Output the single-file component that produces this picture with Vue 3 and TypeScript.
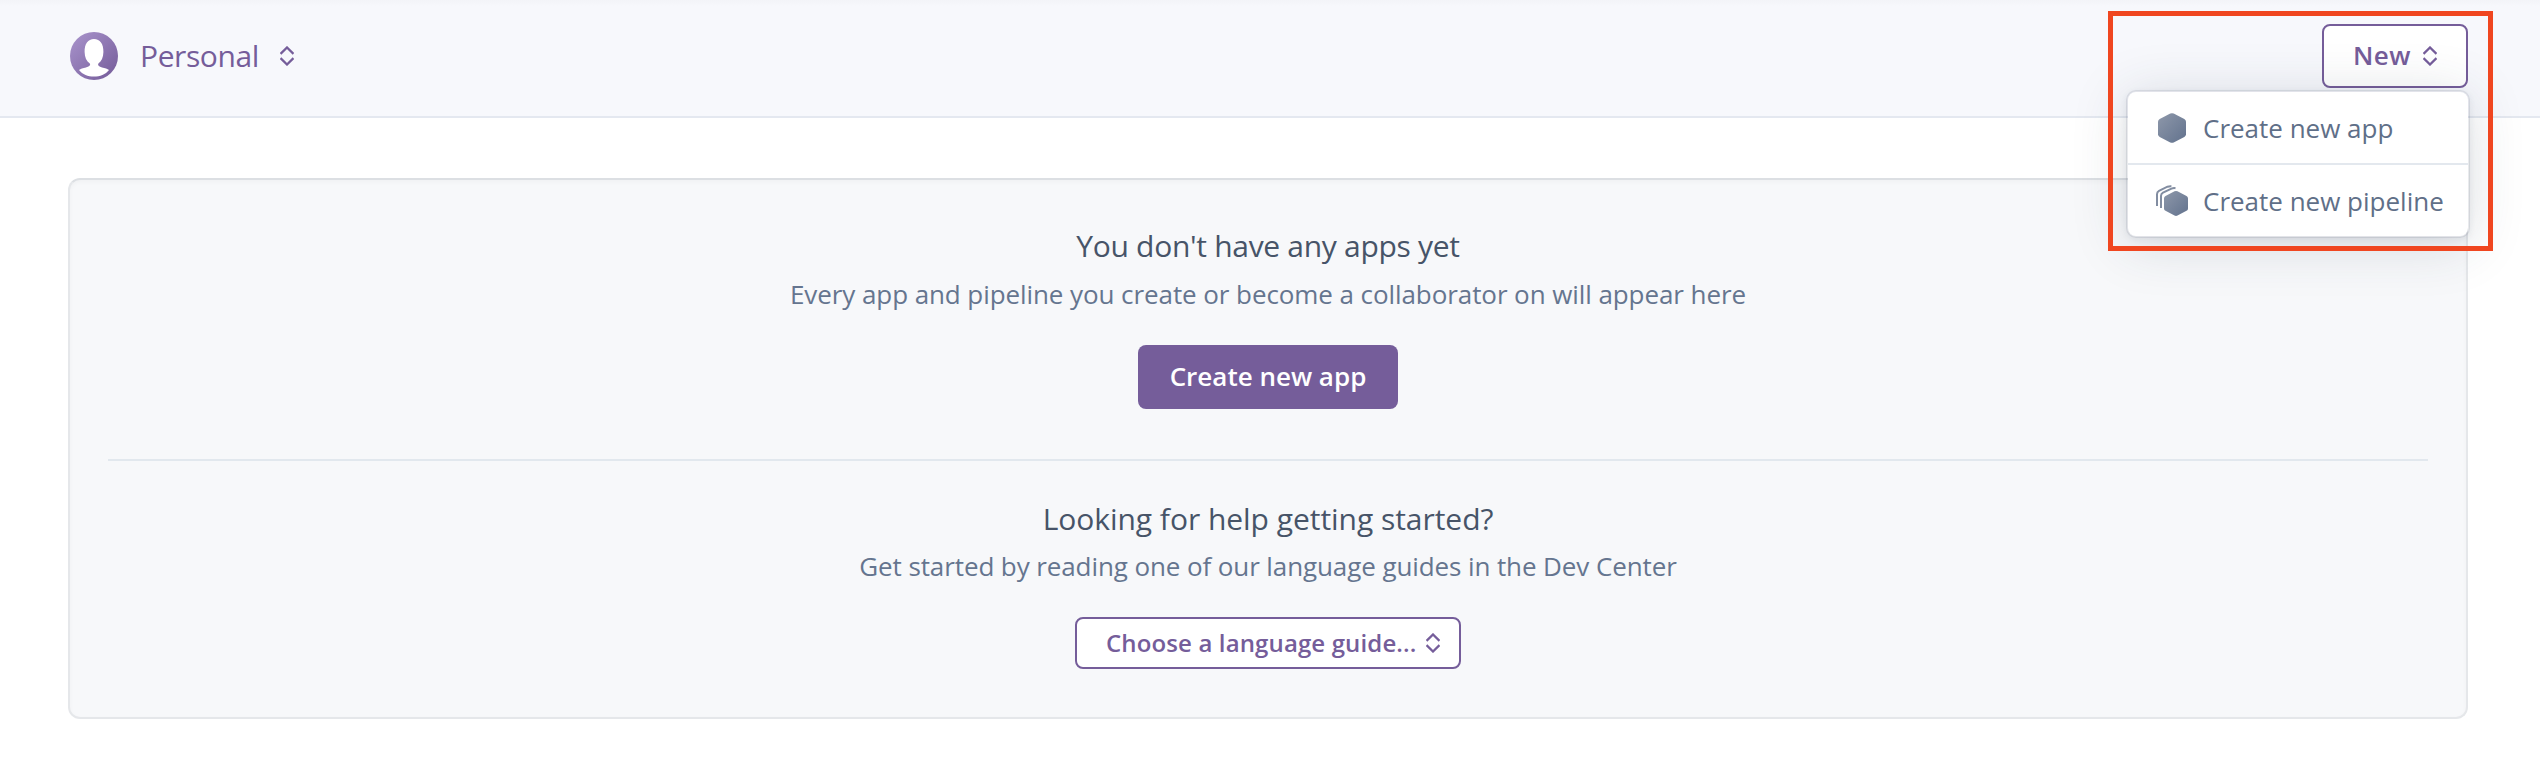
<script setup lang="ts">
interface MenuItem {
  label: string
  icon: 'app' | 'pipeline'
}

const account = 'Personal'
const chevronPath = 'M.5 7.800L7 1.500L13.500 7.800M.5 12.200L7 18.500L13.500 12.200'

const menuItems: MenuItem[] = [
  { label: 'Create new app', icon: 'app' },
  { label: 'Create new pipeline', icon: 'pipeline' },
]
</script>

<template>
  <div class="page">
    <header class="topbar">
      <div class="account">
        <svg class="avatar" width="48" height="48" viewBox="0 0 48 48">
          <defs>
            <linearGradient id="avatar-fill" x1="0" y1="0" x2="1" y2="1">
              <stop offset="0" stop-color="#aa95cd" />
              <stop offset="1" stop-color="#735a98" />
            </linearGradient>
          </defs>
          <circle cx="24" cy="24" r="24" fill="url(#avatar-fill)" />
          <path
            d="M24 7C30 7 33.6 12 33.4 20C33.3 25.5 31.500 29 28.400 31.600C27.400 33.600 29 34.600 32 35.400C35 36.200 37.500 36.700 39 38C35.500 42.400 30 44.600 24 44.600C18 44.600 12.500 42.400 9 38C10.500 36.700 13 36.200 16 35.400C19 34.600 21 33.600 19.800 31.600C16.500 29 14.700 25.500 14.600 20C14.400 12 18 7 24 7Z"
            fill="#fff"
          />
        </svg>
        <span class="account-name">{{ account }}</span>
        <svg class="chevrons" width="14" height="20" viewBox="0 0 14 20">
          <path :d="chevronPath" />
        </svg>
      </div>

      <div class="new-wrap">
        <button class="outline-button new-button" type="button">
          <span class="label">New</span>
          <svg class="chevrons" width="14" height="20" viewBox="0 0 14 20">
            <path :d="chevronPath" />
          </svg>
        </button>
        <ul class="menu">
          <li v-for="item in menuItems" :key="item.label" class="menu-item">
            <svg v-if="item.icon === 'app'" width="32" height="32" viewBox="0 0 32 32">
              <defs>
                <linearGradient id="app-fill" x1="0" y1="0" x2="1" y2="1">
                  <stop offset="0" stop-color="#8e98aa" />
                  <stop offset="1" stop-color="#62728d" />
                </linearGradient>
              </defs>
              <path
                d="M14.300 1.600Q16 .8 17.700 1.600L28.300 7.100Q30 8 30 9.800V22.200Q30 24 28.300 24.900L17.700 30.400Q16 31.200 14.300 30.400L3.700 24.900Q2 24 2 22.200V9.800Q2 8 3.700 7.100Z"
                fill="url(#app-fill)"
              />
            </svg>
            <svg v-else width="32" height="32" viewBox="0 0 32 32">
              <defs>
                <linearGradient id="pipeline-fill" x1="0" y1="0" x2="1" y2="1">
                  <stop offset="0" stop-color="#8e98aa" />
                  <stop offset="1" stop-color="#62728d" />
                </linearGradient>
              </defs>
              <path
                d="M18.500 6.300Q20 5.500 21.500 6.300L30.500 11Q32 11.800 32 13.400V23.400Q32 25 30.500 25.800L21.500 30.500Q20 31.300 18.500 30.500L9.500 25.800Q8 25 8 23.400V13.400Q8 11.800 9.500 11Z"
                fill="url(#pipeline-fill)"
              />
              <path
                d="M1 21V9.200Q1 6.900 3 5.800L11.500 1.700Q13.300 1 15.400 1.200M5 23V11Q5 8.800 7 7.700L15.500 3.600Q17.500 2.800 19.500 3.200"
                fill="none"
                stroke="#828da1"
                stroke-width="2"
              />
            </svg>
            <span>{{ item.label }}</span>
          </li>
        </ul>
        <div class="highlight"></div>
      </div>
    </header>

    <main class="panel">
      <section class="block">
        <h2 class="title title-apps">You don't have any apps yet</h2>
        <p class="text text-apps">
          Every app and pipeline you create or become a collaborator on will appear here
        </p>
        <button class="solid-button" type="button"><span class="label">Create new app</span></button>
      </section>
      <hr class="divider" />
      <section class="block">
        <h2 class="title title-help">Looking for help getting started?</h2>
        <p class="text text-help">
          Get started by reading one of our language guides in the Dev Center
        </p>
        <button class="outline-button guide-button" type="button">
          <span class="label">Choose a language guide...</span>
          <svg class="chevrons" width="14" height="20" viewBox="0 0 14 20">
            <path :d="chevronPath" />
          </svg>
        </button>
      </section>
    </main>
  </div>
</template>

<style>
body {
  background: #fff;
  overflow: hidden;
}
</style>

<style scoped>
.page {
  box-sizing: border-box;
  height: 764px;
  font-family: "Open Sans", "Noto Sans", sans-serif;
  font-size: 26px;
  color: #5f6f88;
}

.topbar {
  box-sizing: border-box;
  display: flex;
  justify-content: space-between;
  height: 118px;
  padding: 24px 72px 0 70px;
  background: linear-gradient(#f3f4f8, #f7f8fc 6px);
  border-bottom: 2px solid #e4e8f0;
}

.account {
  display: flex;
  align-items: center;
  height: 64px;
  color: #755d9a;
}

.avatar {
  margin-right: 22px;
}

.account-name {
  width: 140px;
  font-size: 30px;
  line-height: 40px;
  letter-spacing: -0.4px;
}

.chevrons {
  flex: none;
  fill: none;
  stroke: #755d9a;
  stroke-width: 2.3;
}

.label {
  position: relative;
  top: -1px;
}

button {
  box-sizing: border-box;
  display: flex;
  align-items: center;
  margin: 0;
  font-family: inherit;
  font-weight: 600;
}

.outline-button {
  justify-content: space-between;
  color: #755d9a;
  background: #fff;
  border: 2px solid #755d9a;
  border-radius: 8px;
}

.new-wrap {
  position: relative;
  width: 146px;
  height: 64px;
}

.new-button {
  width: 146px;
  height: 64px;
  padding: 0 29px;
  font-size: 26px;
  letter-spacing: 0.4px;
}

.menu {
  position: absolute;
  top: 66px;
  right: -2px;
  box-sizing: border-box;
  width: 344px;
  margin: 0;
  padding: 0;
  list-style: none;
  background: #fff;
  background-clip: padding-box;
  border: 2px solid rgba(70, 85, 105, 0.12);
  border-radius: 10px;
  box-shadow: 0 6px 54px rgba(40, 60, 80, 0.17), 0 2px 6px rgba(40, 60, 80, 0.07);
}

.menu-item {
  display: flex;
  align-items: center;
  gap: 15px;
  height: 71px;
  padding-left: 28px;
  line-height: 36px;
  white-space: nowrap;
}

.menu-item + .menu-item {
  border-top: 2px solid #e3e8ee;
}

.highlight {
  position: absolute;
  top: -13px;
  right: -25px;
  box-sizing: border-box;
  width: 385px;
  height: 240px;
  border: 5px solid #f04620;
}

.panel {
  box-sizing: border-box;
  height: 541px;
  margin: 60px 72px 0 68px;
  padding: 46px 38px 0;
  background: #f7f8fa;
  border: 2px solid #e5e7ea;
  border-top-color: #dcdfe3;
  border-radius: 12px;
  box-shadow: inset 0 2px 4px rgba(0, 0, 0, 0.03);
}

.block {
  display: flex;
  flex-direction: column;
  align-items: center;
}

.title {
  margin: 0;
  font-size: 30px;
  font-weight: 400;
  line-height: 40px;
  color: #475468;
}

.title-apps {
  letter-spacing: -0.3px;
}

.title-help {
  letter-spacing: -0.04px;
}

.text {
  margin: 10px 0 33px;
  line-height: 36px;
  color: #65758f;
}

.text-apps {
  letter-spacing: -0.08px;
}

.text-help {
  margin-top: 9px;
  letter-spacing: -0.1px;
}

.solid-button {
  justify-content: center;
  width: 260px;
  height: 64px;
  padding: 0;
  font-size: 26px;
  color: #fff;
  background: #755d9a;
  border: 0;
  border-radius: 8px;
}

.divider {
  height: 2px;
  margin: 50px 0 38px;
  background: #e2e8ee;
  border: 0;
}

.guide-button {
  width: 386px;
  height: 52px;
  padding: 0 19px 0 29px;
  font-size: 24px;
  letter-spacing: 0.13px;
}
</style>
